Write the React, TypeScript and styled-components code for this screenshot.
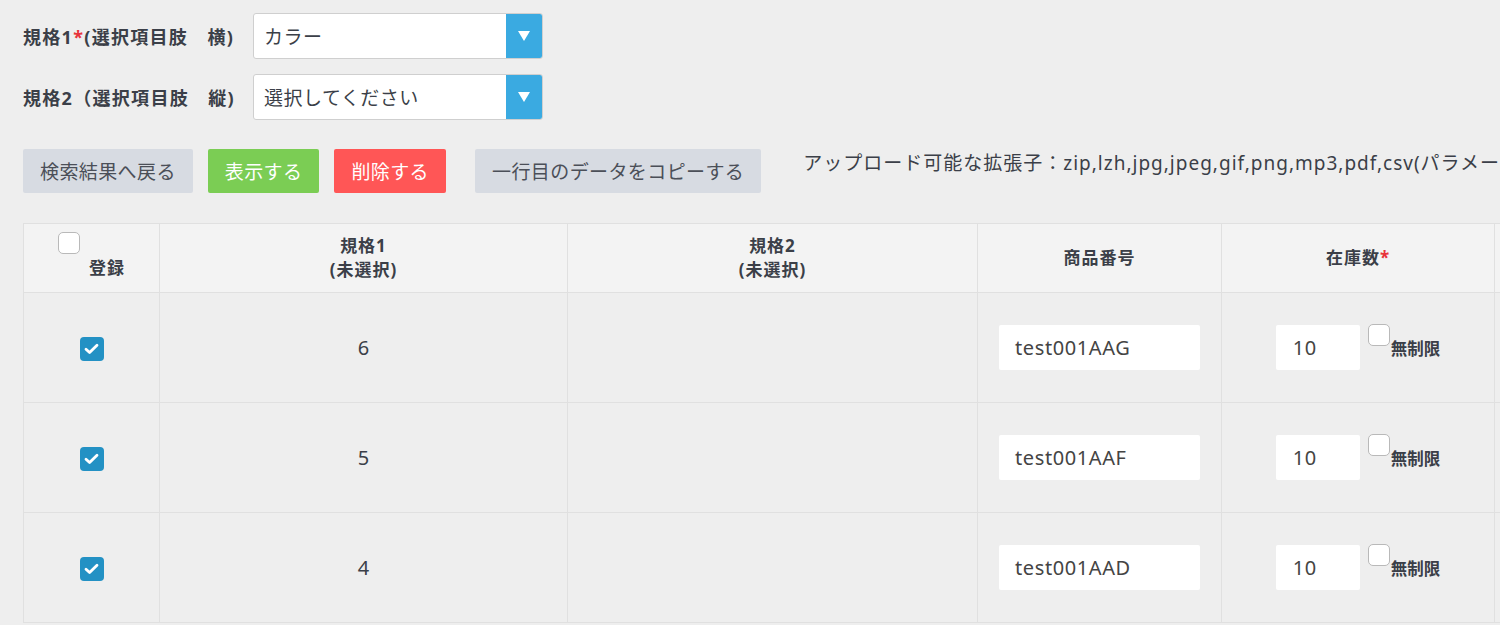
import React from "react";
import styled, { createGlobalStyle } from "styled-components";

const GlobalStyle = createGlobalStyle`
  html, body {
    margin: 0;
    padding: 0;
    background: #eeeeee;
  }
  body {
    font-family: "Noto Sans", "Noto Sans CJK JP", sans-serif;
    color: #3b3f48;
    overflow: hidden;
  }
`;

const Page = styled.div`
  width: 1500px;
  height: 625px;
  overflow: hidden;
  padding: 13px 0 0 23px;
  box-sizing: border-box;
`;

const FormRow = styled.div`
  display: flex;
  align-items: center;
  margin-bottom: 15px;
`;

const Label = styled.div`
  width: 230px;
  font-size: 18px;
  letter-spacing: 1.3px;
  font-weight: 700;
  color: #3b3f48;
  white-space: nowrap;
`;

const Required = styled.span`
  color: #e8333a;
`;

const SelectBox = styled.div`
  display: flex;
  width: 290px;
  height: 46px;
  box-sizing: border-box;
  border: 1px solid #cfcfcf;
  border-radius: 3px;
  background: #fff;
  overflow: hidden;
`;

const SelectText = styled.div`
  flex: 1;
  display: flex;
  align-items: center;
  padding-left: 10px;
  font-size: 19px;
  letter-spacing: 0.5px;
  color: #3b3f48;
`;

const SelectArrow = styled.div`
  width: 36px;
  background: #3aaae1;
  display: flex;
  align-items: center;
  justify-content: center;
`;

const ButtonBar = styled.div`
  display: flex;
  align-items: flex-start;
  margin-top: 29px;
  white-space: nowrap;
`;

const Button = styled.button<{ $kind: "gray" | "green" | "red" }>`
  height: 44px;
  padding: 0 17px;
  border: none;
  border-radius: 2px;
  font-family: inherit;
  font-size: 19px;
  letter-spacing: 0.4px;
  margin-right: ${(p) => (p.$kind === "red" ? 29 : 15)}px;
  background: ${(p) =>
    p.$kind === "green" ? "#7bcd54" : p.$kind === "red" ? "#ff5656" : "#d7dbe2"};
  color: ${(p) => (p.$kind === "gray" ? "#4b4f58" : "#ffffff")};
`;

const UploadNote = styled.div`
  margin-left: 27px;
  font-size: 19px;
  letter-spacing: 1px;
  line-height: 28px;
  color: #3b3f48;
`;

const TableWrap = styled.div`
  margin-top: 30px;
  width: 1800px;
`;

const Table = styled.table`
  border-collapse: collapse;
  table-layout: fixed;
  width: 1800px;
`;

const Th = styled.th<{ $w: number }>`
  width: ${(p) => p.$w}px;
  height: 69px;
  box-sizing: border-box;
  background: #f3f3f3;
  border: 1px solid #e0e0e0;
  font-size: 17px;
  letter-spacing: 1px;
  font-weight: 700;
  line-height: 24px;
  color: #3b3f48;
  text-align: center;
  vertical-align: middle;
  padding: 0;
`;

const Td = styled.td`
  height: 110px;
  box-sizing: border-box;
  border: 1px solid #e0e0e0;
  background: #eeeeee;
  text-align: center;
  vertical-align: middle;
  font-size: 20px;
  color: #3b3f48;
  padding: 0;
`;

const HeadCheck = styled.div`
  display: inline-flex;
  flex-direction: column;
  align-items: flex-start;
  margin-top: -9px;
`;

const HeadCheckLabel = styled.span`
  margin-left: 31px;
  margin-top: 2px;
`;

const EmptyBox = styled.span`
  display: inline-block;
  width: 22px;
  height: 22px;
  box-sizing: border-box;
  background: #fff;
  border: 1px solid #b9b9b9;
  border-radius: 5px;
`;

const CheckedBox = styled.span`
  display: inline-flex;
  align-items: center;
  justify-content: center;
  width: 24px;
  height: 24px;
  border-radius: 4px;
  background: #2391c4;
  vertical-align: middle;
`;

const TextInput = styled.div<{ $w: number }>`
  width: ${(p) => p.$w}px;
  height: 45px;
  box-sizing: border-box;
  background: #fff;
  border-radius: 2px;
  padding-left: ${(p) => (p.$w > 100 ? 16 : 17)}px;
  display: flex;
  align-items: center;
  font-size: 20px;
  letter-spacing: 0.6px;
  color: #444;
  text-align: left;
`;

const StockGroup = styled.div`
  display: inline-flex;
  align-items: flex-start;
  vertical-align: middle;
`;

const UnlimitedBox = styled(EmptyBox)`
  margin: -1px 1px 0 8px;
`;

const UnlimitedLabel = styled.span`
  font-size: 16.5px;
  font-weight: 700;
  line-height: 24px;
  margin-top: 12px;
`;

const Centered = styled.div`
  display: flex;
  justify-content: center;
`;

const Arrow = () => (
  <svg width="12" height="10" viewBox="0 0 12 10">
    <path d="M0 0 H12 L6 10 Z" fill="#fff" />
  </svg>
);

const Check = () => (
  <svg width="15" height="12" viewBox="0 0 15 12">
    <path
      d="M2 6.2 L5.6 9.6 L13 2.2"
      fill="none"
      stroke="#fff"
      strokeWidth="2.8"
      strokeLinecap="round"
      strokeLinejoin="round"
    />
  </svg>
);

const rows = [
  { no: "6", code: "test001AAG", stock: "10" },
  { no: "5", code: "test001AAF", stock: "10" },
  { no: "4", code: "test001AAD", stock: "10" },
];

export default function App() {
  return (
    <>
      <GlobalStyle />
      <Page>
        <FormRow>
          <Label>
            規格1<Required>*</Required>(選択項目肢　横)
          </Label>
          <SelectBox>
            <SelectText>カラー</SelectText>
            <SelectArrow>
              <Arrow />
            </SelectArrow>
          </SelectBox>
        </FormRow>
        <FormRow>
          <Label>規格2（選択項目肢　縦)</Label>
          <SelectBox>
            <SelectText>選択してください</SelectText>
            <SelectArrow>
              <Arrow />
            </SelectArrow>
          </SelectBox>
        </FormRow>

        <ButtonBar>
          <Button $kind="gray">検索結果へ戻る</Button>
          <Button $kind="green">表示する</Button>
          <Button $kind="red">削除する</Button>
          <Button $kind="gray">一行目のデータをコピーする</Button>
          <UploadNote>
            アップロード可能な拡張子：zip,lzh,jpg,jpeg,gif,png,mp3,pdf,csv(パラメータ
          </UploadNote>
        </ButtonBar>

        <TableWrap>
          <Table>
            <thead>
              <tr>
                <Th $w={136}>
                  <HeadCheck>
                    <EmptyBox />
                    <HeadCheckLabel>登録</HeadCheckLabel>
                  </HeadCheck>
                </Th>
                <Th $w={408}>
                  規格1
                  <br />
                  (未選択)
                </Th>
                <Th $w={410}>
                  規格2
                  <br />
                  (未選択)
                </Th>
                <Th $w={244}>商品番号</Th>
                <Th $w={273}>
                  在庫数<Required>*</Required>
                </Th>
                <Th $w={329} />
              </tr>
            </thead>
            <tbody>
              {rows.map((r) => (
                <tr key={r.code}>
                  <Td>
                    <CheckedBox>
                      <Check />
                    </CheckedBox>
                  </Td>
                  <Td>{r.no}</Td>
                  <Td />
                  <Td>
                    <Centered>
                      <TextInput $w={201}>{r.code}</TextInput>
                    </Centered>
                  </Td>
                  <Td>
                    <StockGroup>
                      <TextInput $w={84}>{r.stock}</TextInput>
                      <UnlimitedBox />
                      <UnlimitedLabel>無制限</UnlimitedLabel>
                    </StockGroup>
                  </Td>
                  <Td />
                </tr>
              ))}
            </tbody>
          </Table>
        </TableWrap>
      </Page>
    </>
  );
}
